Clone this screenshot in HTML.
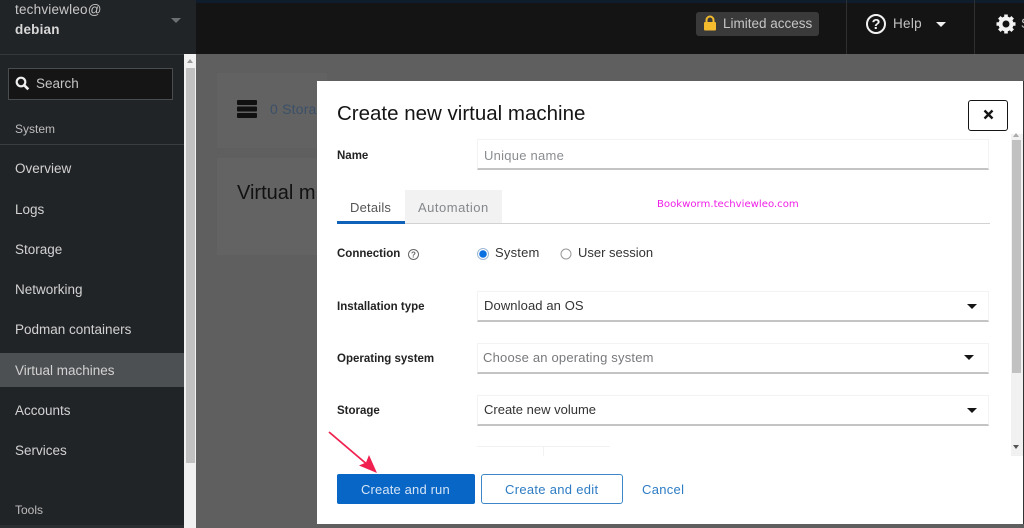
<!DOCTYPE html>
<html><head><meta charset="utf-8"><style>
html,body{margin:0;padding:0}
body{width:1024px;height:528px;overflow:hidden;position:relative;background:#5f5f5f;font-family:"Liberation Sans",sans-serif;}
div,span.t{position:absolute}
.t{white-space:nowrap;line-height:18px;font-size:13.5px}
.n{left:15px;color:#d2d2d2;letter-spacing:0}
.b{font-weight:bold;font-size:11.5px;color:#222;left:337px;letter-spacing:0}
.sel{left:477px;width:510px;height:28px;background:#fff;border:1px solid #f3f3f3;border-bottom:2px solid #c4c4c4;box-sizing:content-box}
.c{width:0;height:0;border-left:5px solid transparent;border-right:5px solid transparent;border-top:5px solid #151515}
</style></head><body>
<!-- top bar -->
<div style="left:196px;top:0;width:828px;height:54px;background:#141414"></div>
<div style="left:196px;top:0;width:828px;height:3px;background:#0f1c2c"></div>
<!-- sidebar -->
<div style="left:0;top:0;width:184px;height:528px;background:#212427"></div>
<div style="left:184px;top:0;width:12px;height:54px;background:#212427"></div>
<div style="left:0;top:54px;width:184px;height:1px;background:#34383b"></div>
<span class="t n" style="top:1px;color:#c8c8c8;letter-spacing:.2px">techviewleo@</span>
<span class="t n" style="top:21px;font-weight:bold;font-size:13.5px;color:#d8d8d8;letter-spacing:.2px">debian</span>
<div class="c" style="left:171px;top:18px;border-top-color:#6d7073"></div>
<div style="left:8px;top:68px;width:163px;height:30px;background:#151515;border:1px solid #4a4d4f"></div>
<svg style="position:absolute;left:15px;top:76px" width="15" height="15" viewBox="0 0 15 15"><circle cx="6" cy="6" r="4.3" fill="none" stroke="#eee" stroke-width="2.2"/><path d="M9.2 9.2L13.3 13.3" stroke="#eee" stroke-width="2.6"/></svg>
<span class="t n" style="left:36px;top:75px;color:#c4c4c4">Search</span>
<span class="t n" style="top:120px;font-size:12px;color:#bdbdbd">System</span>
<div style="left:0;top:144px;width:184px;height:1px;background:#3a3e41"></div>
<span class="t n" style="top:160px">Overview</span>
<span class="t n" style="top:201px">Logs</span>
<span class="t n" style="top:241px">Storage</span>
<span class="t n" style="top:281px">Networking</span>
<span class="t n" style="top:321px">Podman containers</span>
<div style="left:0;top:353px;width:184px;height:34px;background:#4c5052"></div>
<span class="t n" style="top:362px">Virtual machines</span>
<span class="t n" style="top:402px">Accounts</span>
<span class="t n" style="top:442px">Services</span>
<span class="t n" style="top:501px;font-size:12px;color:#bdbdbd">Tools</span>
<div style="left:0;top:525px;width:184px;height:3px;background:#2b2e31"></div>
<!-- sidebar scrollbar -->
<div style="left:184px;top:54px;width:12px;height:474px;background:#f1f1f1"></div>
<div style="left:186px;top:68px;width:9px;height:395px;background:#c1c1c1"></div>
<div class="c" style="left:187px;top:59px;border-top:0;border-bottom:4px solid #9a9a9a;border-left-width:3.5px;border-right-width:3.5px"></div>
<!-- top right -->
<div style="left:696px;top:12px;width:123px;height:24px;border-radius:3px;background:#3a3a3a"></div>
<svg style="position:absolute;left:703px;top:15px" width="14" height="17" viewBox="0 0 14 17"><path d="M3.5 8V5a3.5 3.5 0 0 1 7 0v3" fill="none" stroke="#f4bb2e" stroke-width="2"/><rect x="1" y="7" width="12" height="8.5" rx="1" fill="#f4bb2e"/></svg>
<span class="t" style="left:723px;top:15px;color:#c6c6c6;letter-spacing:0">Limited access</span>
<div style="left:846px;top:0;width:1px;height:54px;background:#303030"></div>
<div style="left:974px;top:0;width:1px;height:54px;background:#303030"></div>
<svg style="position:absolute;left:865px;top:13px" width="22" height="22" viewBox="0 0 22 22"><circle cx="11" cy="11" r="9" fill="none" stroke="#f2f2f2" stroke-width="2"/><text x="11" y="16" text-anchor="middle" font-family="Liberation Sans" font-weight="bold" font-size="14.5" fill="#f2f2f2">?</text></svg>
<span class="t" style="left:893px;top:15px;color:#c2c2c2;letter-spacing:.3px">Help</span>
<div class="c" style="left:936px;top:22px;border-top-color:#f0f0f0"></div>
<svg style="position:absolute;left:995px;top:13px" width="22" height="22" viewBox="0 0 22 22"><circle cx="11" cy="11" r="5.5" fill="none" stroke="#f4f4f4" stroke-width="4"/><g stroke="#f4f4f4" stroke-width="3.6"><path d="M11 1.5v3.5M11 17v3.5M1.5 11h3.5M17 11h3.5M4.3 4.3l2.5 2.5M15.2 15.2l2.5 2.5M4.3 17.7l2.5-2.5M15.2 6.8l2.5-2.5"/></g></svg>
<span class="t" style="left:1021px;top:15px;color:#c2c2c2">S</span>
<!-- background page -->
<div style="left:217px;top:73px;width:110px;height:75px;background:#626262"></div>
<div style="left:217px;top:158px;width:110px;height:97px;background:#636363"></div>
<svg style="position:absolute;left:236px;top:99px" width="22" height="20" viewBox="0 0 22 20"><rect x="1" y="1" width="20" height="5" rx="1" fill="#111"/><rect x="1" y="7.5" width="20" height="5" rx="1" fill="#111"/><rect x="1" y="14" width="20" height="5" rx="1" fill="#111"/></svg>
<span class="t" style="left:270px;top:100px;font-size:14px;color:#3b5068;letter-spacing:.2px">0 Storage</span>
<span class="t" style="left:237px;top:181px;font-size:20px;line-height:24px;color:#111">Virtual m</span>
<!-- modal -->
<div style="left:317px;top:81px;width:706px;height:443px;background:#fff"></div>
<div style="left:1023px;top:81px;width:1px;height:443px;background:#333"></div>
<span class="t" style="left:337px;top:101px;font-size:20.5px;line-height:26px;color:#151515">Create new virtual machine</span>
<div style="left:968px;top:100px;width:40px;height:31px;border:1.5px solid #151515;border-radius:3px;box-sizing:border-box;background:#fff"></div>
<svg style="position:absolute;left:983px;top:109px" width="11" height="11" viewBox="0 0 11 11"><path d="M1.5 1.5L9.5 9.5M9.5 1.5L1.5 9.5" stroke="#151515" stroke-width="2.4"/></svg>
<!-- modal scrollbar -->
<div style="left:1011px;top:134px;width:12px;height:322px;background:#f1f1f1"></div>
<div style="left:1012px;top:140px;width:9px;height:233px;background:#c1c1c1"></div>
<div class="c" style="left:1013px;top:133px;border-top:0;border-bottom:4px solid #aaa;border-left-width:3.5px;border-right-width:3.5px"></div>
<div class="c" style="left:1013px;top:445px;border-top:4px solid #555;border-left-width:3.5px;border-right-width:3.5px"></div>
<!-- name -->
<span class="t b" style="top:147px">Name</span>
<div class="sel" style="top:139px"></div>
<span class="t" style="left:484px;top:147px;font-size:13px;color:#8a8d90;letter-spacing:.25px">Unique name</span>
<!-- tabs -->
<div style="left:337px;top:223px;width:653px;height:1px;background:#d2d2d2"></div>
<div style="left:405px;top:190px;width:97px;height:33px;background:#f2f2f2"></div>
<div style="left:337px;top:221px;width:68px;height:3px;background:#0f62b8"></div>
<span class="t" style="left:350px;top:199px;font-size:13px;color:#555;letter-spacing:.2px">Details</span>
<span class="t" style="left:418px;top:199px;font-size:13px;color:#85888b;letter-spacing:.5px">Automation</span>
<span class="t" style="left:657px;top:196px;font-family:'DejaVu Sans',sans-serif;font-size:10.1px;color:#f020e8;letter-spacing:0">Bookworm.techviewleo.com</span>
<!-- connection -->
<span class="t b" style="top:245px">Connection</span>
<svg style="position:absolute;left:407px;top:248px" width="13" height="13" viewBox="0 0 13 13"><circle cx="6.5" cy="6.5" r="5" fill="none" stroke="#666" stroke-width="1"/><text x="6.5" y="9.5" text-anchor="middle" font-family="Liberation Sans" font-weight="bold" font-size="8" fill="#666">?</text></svg>
<svg style="position:absolute;left:476px;top:247px" width="14" height="14" viewBox="0 0 14 14"><circle cx="7" cy="7" r="5.5" fill="#fff" stroke="#9db8d6" stroke-width="1"/><circle cx="7" cy="7" r="3.8" fill="#0a6fe0"/></svg>
<span class="t" style="left:495px;top:244px;font-size:13px;color:#333;letter-spacing:.2px">System</span>
<svg style="position:absolute;left:559px;top:247px" width="14" height="14" viewBox="0 0 14 14"><circle cx="7" cy="7" r="5" fill="#fff" stroke="#999" stroke-width="1"/></svg>
<span class="t" style="left:578px;top:244px;font-size:13px;color:#333;letter-spacing:0">User session</span>
<!-- selects -->
<span class="t b" style="top:298px">Installation type</span>
<div class="sel" style="top:291px"></div>
<span class="t" style="left:484px;top:297px;font-size:13px;color:#333;letter-spacing:.1px">Download an OS</span>
<div class="c" style="left:967px;top:304px"></div>
<span class="t b" style="top:350px">Operating system</span>
<div class="sel" style="top:343px"></div>
<span class="t" style="left:483px;top:349px;font-size:13px;color:#77797c;letter-spacing:.2px">Choose an operating system</span>
<div class="c" style="left:964px;top:355px"></div>
<span class="t b" style="top:402px">Storage</span>
<div class="sel" style="top:395px"></div>
<span class="t" style="left:484px;top:401px;font-size:13px;color:#333;letter-spacing:0">Create new volume</span>
<div class="c" style="left:967px;top:408px"></div>
<div style="left:477px;top:446px;width:133px;height:1px;background:#f2f2f2"></div>
<div style="left:543px;top:446px;width:1px;height:10px;background:#f2f2f2"></div>
<!-- buttons -->
<div style="left:337px;top:474px;width:138px;height:30px;background:#0866c6;border-radius:2px"></div>
<span class="t" style="left:361px;top:481px;font-size:13px;color:#d5e4f5;letter-spacing:.15px">Create and run</span>
<div style="left:481px;top:474px;width:142px;height:30px;box-sizing:border-box;border:1px solid #3d87c9;border-radius:3px"></div>
<span class="t" style="left:505px;top:481px;font-size:13px;color:#2d7cc4;letter-spacing:.3px">Create and edit</span>
<span class="t" style="left:642px;top:481px;font-size:13px;color:#2d7cc4;letter-spacing:.3px">Cancel</span>
<!-- arrow -->
<svg style="position:absolute;left:325px;top:428px" width="55" height="46" viewBox="0 0 55 46"><path d="M4 4L44 38" stroke="#f0204f" stroke-width="1.8"/><path d="M52 45L34 37.5L41 34.5L44 27Z" fill="#f0204f"/></svg>
</body></html>
